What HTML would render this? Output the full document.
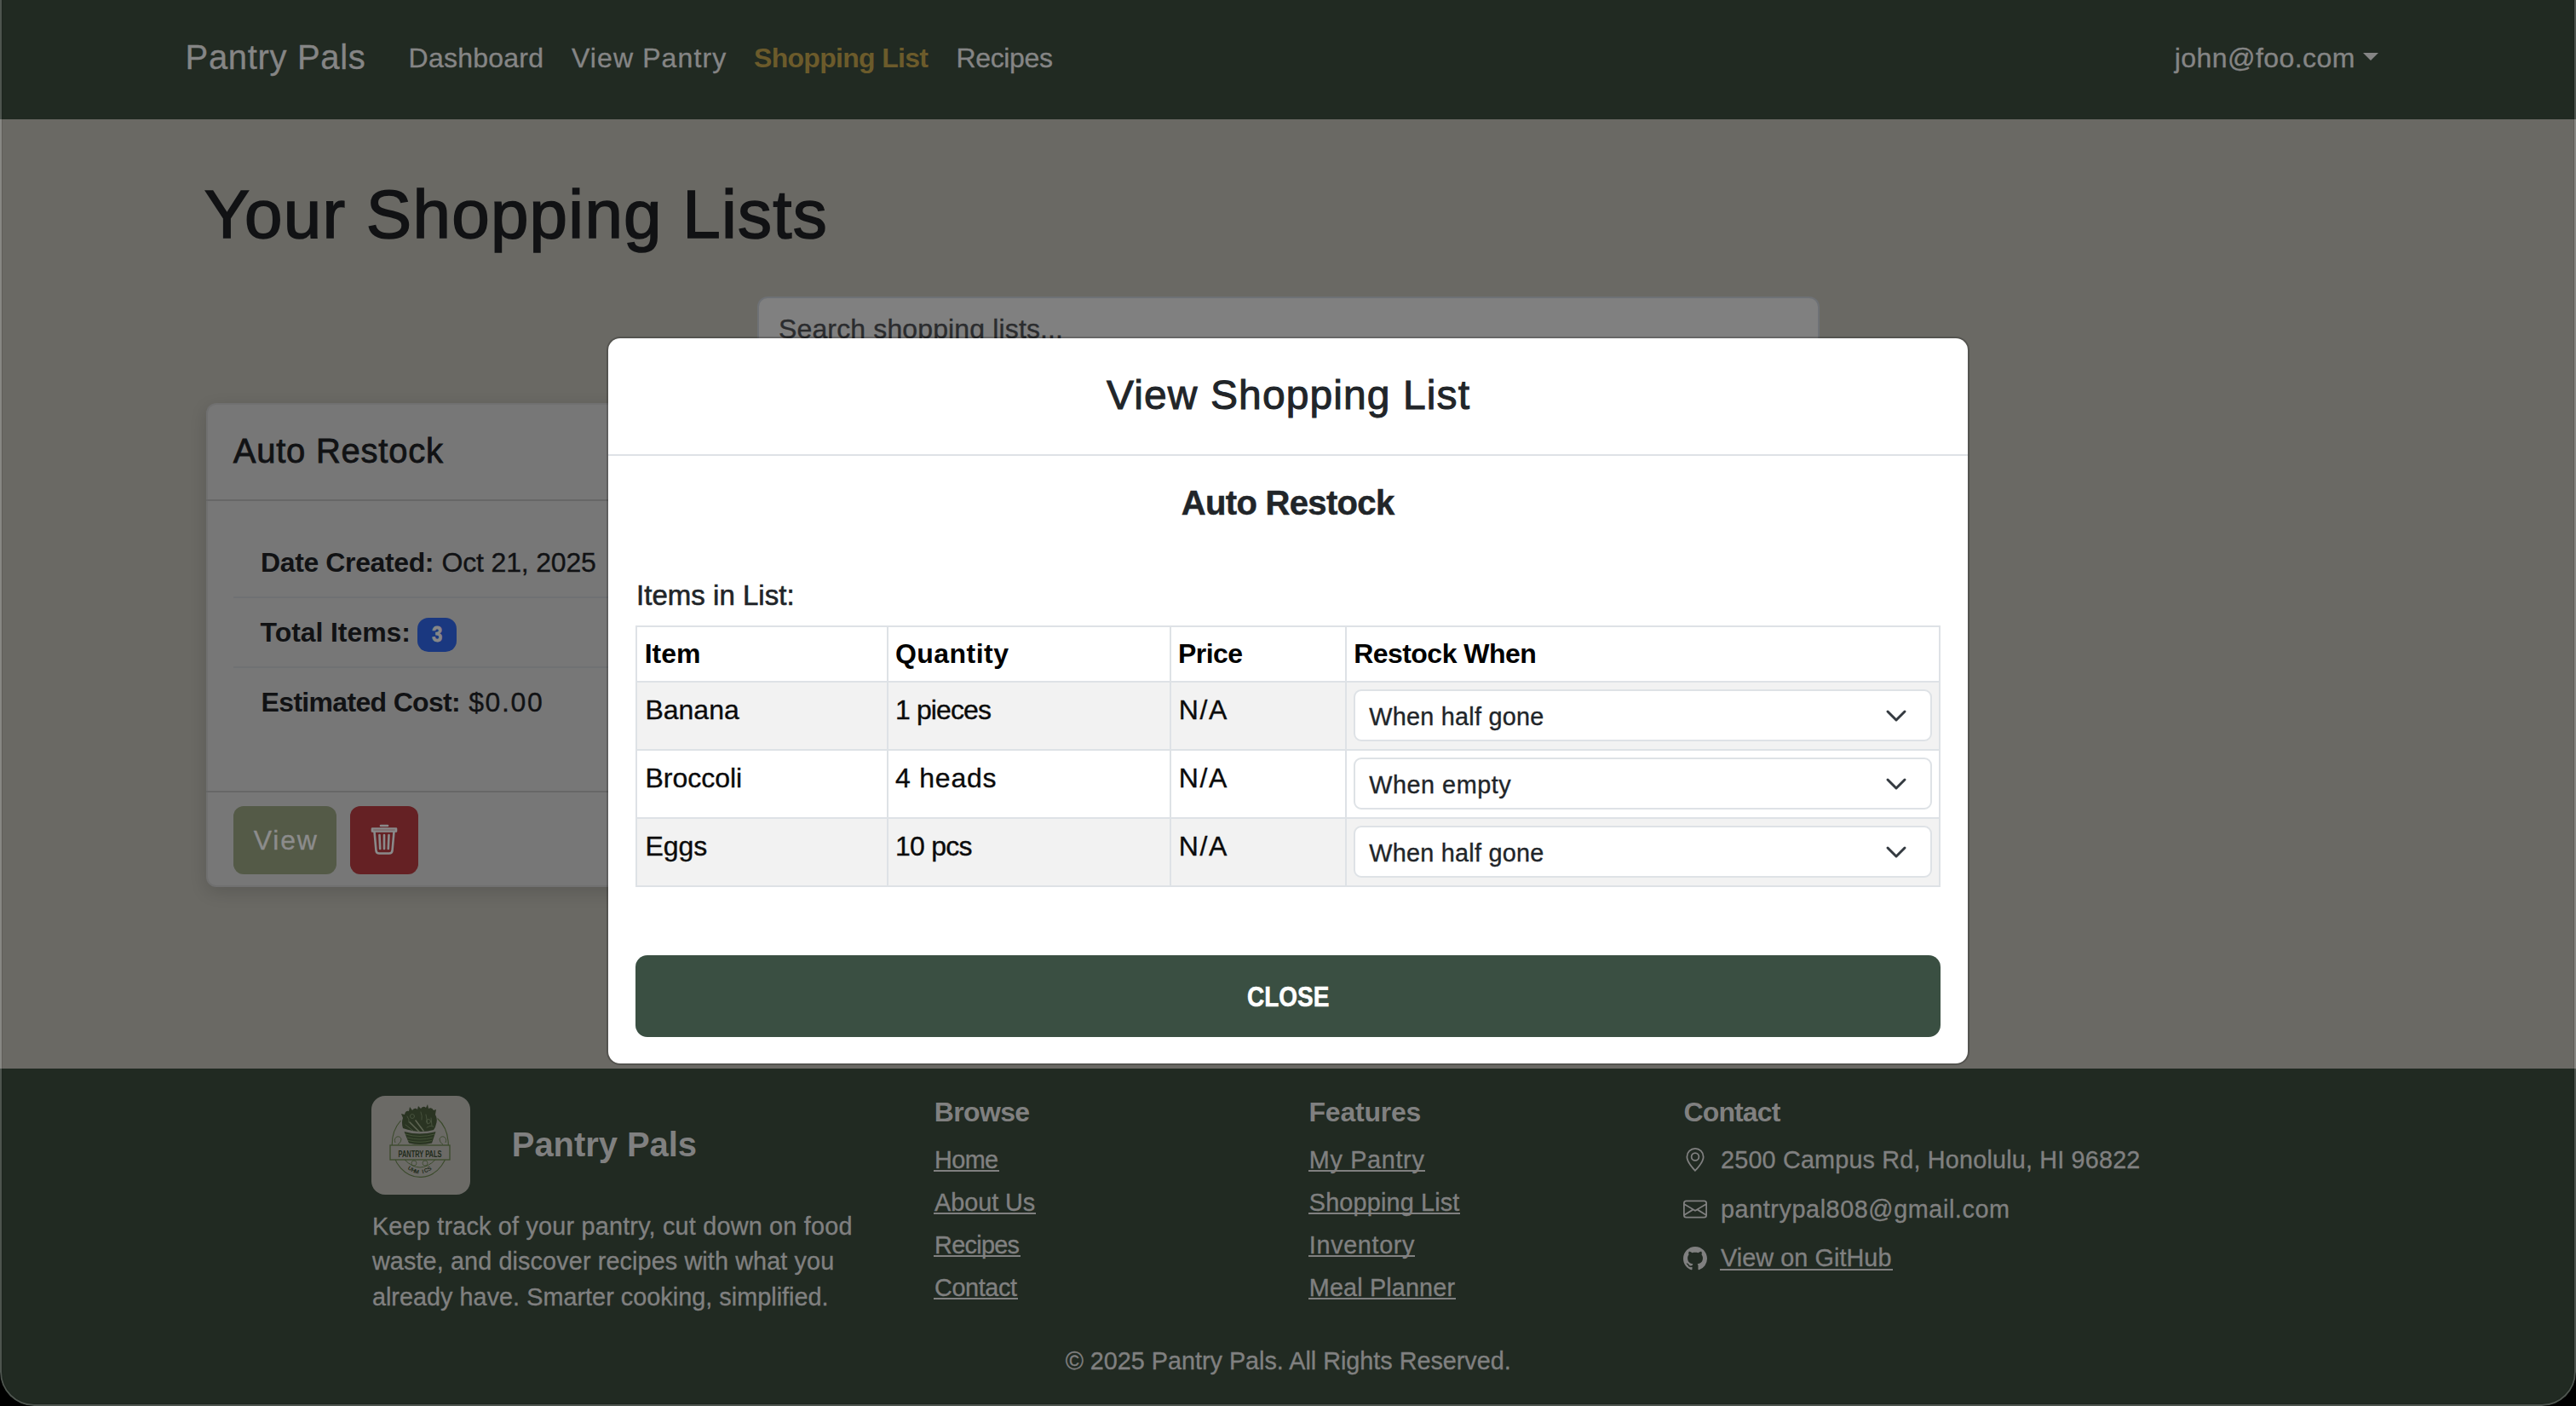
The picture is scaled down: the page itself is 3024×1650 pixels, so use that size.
<!DOCTYPE html>
<html><head><meta charset="utf-8"><title>Pantry Pals - Shopping Lists</title>
<style>
html,body{margin:0;padding:0;}
body{width:3024px;height:1650px;overflow:hidden;background:#000;position:relative;font-family:"Liberation Sans",sans-serif;}
#win{position:absolute;left:0;top:0;width:3024px;height:1650px;overflow:hidden;border-radius:0 0 40px 40px;}
.b{position:absolute;}
.t{position:absolute;white-space:pre;}
#frame{position:absolute;left:0;top:-40px;width:3024px;height:1690px;box-sizing:border-box;border:2px solid rgba(255,255,255,0.2);box-shadow:inset 0 0 0 1px rgba(0,0,0,0.1);border-radius:40px;pointer-events:none;}
</style></head><body><div id="win">
<div class="b" style="left:0px;top:0px;width:3024px;height:140px;background:#212a22"></div>
<span class="t" style="left:217.60px;top:46.63px;font-size:40.00px;line-height:40.00px;color:#858585;letter-spacing:0.668px;-webkit-text-stroke:0.35px #858585">Pantry Pals</span>
<span class="t" style="left:479.60px;top:51.91px;font-size:32.00px;line-height:32.00px;color:#858585;letter-spacing:0.232px;-webkit-text-stroke:0.35px #858585">Dashboard</span>
<span class="t" style="left:670.90px;top:51.91px;font-size:32.00px;line-height:32.00px;color:#858585;letter-spacing:1.116px;-webkit-text-stroke:0.35px #858585">View Pantry</span>
<span class="t" style="left:885.00px;top:51.91px;font-size:32.00px;line-height:32.00px;font-weight:700;color:#6c5b2b;letter-spacing:-0.693px">Shopping List</span>
<span class="t" style="left:1122.60px;top:51.91px;font-size:32.00px;line-height:32.00px;color:#858585;letter-spacing:-0.386px;-webkit-text-stroke:0.35px #858585">Recipes</span>
<span class="t" style="left:2552.80px;top:51.91px;font-size:32.00px;line-height:32.00px;color:#858585;letter-spacing:0.435px;-webkit-text-stroke:0.35px #858585">john@foo.com</span>
<div class="b" style="left:2774px;top:62px;width:0;height:0;border-left:9px solid transparent;border-right:9px solid transparent;border-top:9px solid #858585"></div>
<div class="b" style="left:0px;top:140px;width:3024px;height:1114px;background:#6a6964"></div>
<span class="t" style="left:239.70px;top:212.27px;font-size:80.00px;line-height:80.00px;color:#111214;letter-spacing:1.248px;-webkit-text-stroke:1.6px #111214">Your Shopping Lists</span>
<div class="b" style="left:889px;top:348px;width:1247px;height:112px;background:#808080;border:2px solid #6e7175;border-radius:12px;box-sizing:border-box"></div>
<span class="t" style="left:914.00px;top:369.91px;font-size:32.00px;line-height:32.00px;color:#2b2c2e;letter-spacing:0.137px;-webkit-text-stroke:0.35px #2b2c2e">Search shopping lists...</span>
<div class="b" style="left:242px;top:473px;width:558px;height:568px;background:#777777;border:2px solid rgba(0,0,0,0.06);border-radius:12px;box-sizing:border-box;box-shadow:0 6px 20px rgba(0,0,0,0.14)"></div>
<div class="b" style="left:242px;top:586px;width:558px;height:2px;background:#676767"></div>
<span class="t" style="left:273.80px;top:509.13px;font-size:40.00px;line-height:40.00px;color:#111214;letter-spacing:0.749px;-webkit-text-stroke:0.8px #111214">Auto Restock</span>
<span class="t" style="left:306.00px;top:643.91px;font-size:32.00px;line-height:32.00px;font-weight:700;color:#111214;letter-spacing:-0.380px">Date Created:</span>
<span class="t" style="left:518.60px;top:643.91px;font-size:32.00px;line-height:32.00px;color:#111214;letter-spacing:-0.185px;-webkit-text-stroke:0.35px #111214">Oct 21, 2025</span>
<div class="b" style="left:274px;top:700px;width:526px;height:2px;background:#6f7173"></div>
<span class="t" style="left:305.60px;top:725.91px;font-size:32.00px;line-height:32.00px;font-weight:700;color:#111214;letter-spacing:-0.083px">Total Items:</span>
<div class="b" style="left:490px;top:725px;width:46px;height:40px;background:#1a3880;border-radius:13px"></div>
<span class="t" style="left:506.65px;top:732.03px;font-size:25.00px;line-height:25.00px;font-weight:700;color:#878787;transform:scaleX(0.8849);transform-origin:0 0;-webkit-text-stroke:0.8px #878787">3</span>
<div class="b" style="left:274px;top:782px;width:526px;height:2px;background:#6f7173"></div>
<span class="t" style="left:306.60px;top:808.31px;font-size:32.00px;line-height:32.00px;font-weight:700;color:#111214;letter-spacing:-0.677px">Estimated Cost:</span>
<span class="t" style="left:550.20px;top:808.31px;font-size:32.00px;line-height:32.00px;color:#111214;letter-spacing:1.609px;-webkit-text-stroke:0.35px #111214">$0.00</span>
<div class="b" style="left:242px;top:928px;width:558px;height:2px;background:#676767"></div>
<div class="b" style="left:274px;top:946px;width:121px;height:80px;background:#545a47;border-radius:12px"></div>
<span class="t" style="left:297.70px;top:969.91px;font-size:32.00px;line-height:32.00px;color:#8c8c8c;letter-spacing:1.812px;-webkit-text-stroke:0.35px #8c8c8c">View</span>
<div class="b" style="left:411px;top:946px;width:80px;height:80px;background:#652124;border-radius:12px"></div>
<svg class="b" style="left:434px;top:966px" width="34" height="38" viewBox="0 0 34 38" fill="none" stroke="#8a8a8a" stroke-width="2.6" stroke-linecap="round" stroke-linejoin="round">
<path d="M3 6.5 H31 V9.5 H3 Z"/><path d="M13 3 H21"/><path d="M5.5 10 L7.5 32.5 Q8 35.5 11 35.5 H23 Q26 35.5 26.5 32.5 L28.5 10"/>
<path d="M11.5 14 L12.2 30"/><path d="M17 14 V30"/><path d="M22.5 14 L21.8 30"/></svg>
<div class="b" style="left:0px;top:1254px;width:3024px;height:396px;background:#212a22"></div>
<div class="b" style="left:436px;top:1286px;width:116px;height:116px;background:#6b6a66;border-radius:16px"></div>
<svg class="b" style="left:436px;top:1286px" width="116" height="116" viewBox="0 0 116 116" fill="none">
<path d="M34.5 29 A33 38.5 0 1 0 77.5 26.5" stroke="#3b4a2c" stroke-width="1.1"/>
<g fill="#2a3422">
<path d="M37 38 Q35 31 37 26 L35 21 L39 22 Q40 17 44 18 L45 13 L48 17 Q51 13 54 16 L55 12 L58 15 Q61 11 64 14 L66 10 L67 15 Q71 13 73 17 L76 16 L75 22 Q78 27 76 33 Q75 38 73 40 Q57 45 37 38 Z"/>
</g>
<g stroke="#5d6452" stroke-width="1.6" stroke-linecap="round">
<path d="M45 31 L56 42"/><path d="M52 29 L61 41"/>
</g>
<g stroke="#4a5540" stroke-width="0.9" stroke-linecap="round">
<path d="M40 34 L49 41"/><path d="M64 22 L66 33"/><path d="M70 26 L71 35"/><path d="M42 24 Q45 28 44 31"/><path d="M58 19 Q60 24 59 28"/><path d="M65 37 Q69 34 73 36"/>
<circle cx="67" cy="30" r="2.5" fill="none"/><circle cx="48" cy="24" r="2.5" fill="none"/>
</g>
<path d="M38.5 42 Q57 47 75.5 42 L71 55.5 Q57 58.5 44 55.5 Z" fill="#2a3522"/>
<g stroke="#4f5e40" stroke-width="0.7">
<path d="M40 45 Q57 50 74 45"/><path d="M42 49 Q57 53 72 49"/><path d="M43 52.5 Q57 56 71 52.5"/>
</g>
<path d="M28 55 Q26 50 30 48 Q34 47 35 51 Q35 55 31 57" stroke="#3b4a2c" stroke-width="0.9"/>
<path d="M87 55 Q89 50 85 48 Q81 47 80 51 Q80 55 84 57" stroke="#3b4a2c" stroke-width="0.9"/>
<rect x="22" y="58" width="70" height="17" fill="#6b6a66" stroke="#3b4a2c" stroke-width="1.3"/>
<text x="57" y="71.5" font-family="Liberation Sans" font-size="11" font-weight="700" fill="#1f2a1a" text-anchor="middle" textLength="51" lengthAdjust="spacingAndGlyphs">PANTRY PALS</text>
<path d="M39 75 Q57 93 75 75" stroke="#3b4a2c" stroke-width="1"/>
<circle cx="50" cy="79" r="3" stroke="#3b4a2c" stroke-width="0.8"/><circle cx="63" cy="79" r="3" stroke="#3b4a2c" stroke-width="0.8"/>
<text x="0" y="0" transform="translate(44.07 87.17) rotate(34.0)" font-family="Liberation Sans" font-size="6.5" font-weight="700" fill="#1f2a1a" text-anchor="middle">U</text><text x="0" y="0" transform="translate(48.33 89.57) rotate(24.4)" font-family="Liberation Sans" font-size="6.5" font-weight="700" fill="#1f2a1a" text-anchor="middle">H</text><text x="0" y="0" transform="translate(52.55 91.02) rotate(12.9)" font-family="Liberation Sans" font-size="6.5" font-weight="700" fill="#1f2a1a" text-anchor="middle">M</text><text x="0" y="0" transform="translate(60.91 91.02) rotate(-13.1)" font-family="Liberation Sans" font-size="6.5" font-weight="700" fill="#1f2a1a" text-anchor="middle">I</text><text x="0" y="0" transform="translate(65.05 89.57) rotate(-25.1)" font-family="Liberation Sans" font-size="6.5" font-weight="700" fill="#1f2a1a" text-anchor="middle">C</text><text x="0" y="0" transform="translate(69.15 87.17) rotate(-35.3)" font-family="Liberation Sans" font-size="6.5" font-weight="700" fill="#1f2a1a" text-anchor="middle">S</text>
</svg>
<span class="t" style="left:600.80px;top:1323.33px;font-size:40.00px;line-height:40.00px;font-weight:700;color:#808080;letter-spacing:-0.068px">Pantry Pals</span>
<span class="t" style="left:436.90px;top:1424.52px;font-size:28.80px;line-height:28.80px;color:#808080;letter-spacing:0.205px;-webkit-text-stroke:0.35px #808080">Keep track of your pantry, cut down on food</span>
<span class="t" style="left:436.96px;top:1466.32px;font-size:28.80px;line-height:28.80px;color:#808080;letter-spacing:0.112px;-webkit-text-stroke:0.35px #808080">waste, and discover recipes with what you</span>
<span class="t" style="left:436.90px;top:1508.02px;font-size:28.80px;line-height:28.80px;color:#808080;letter-spacing:0.028px;-webkit-text-stroke:0.35px #808080">already have. Smarter cooking, simplified.</span>
<span class="t" style="left:1096.85px;top:1288.91px;font-size:32.00px;line-height:32.00px;font-weight:700;color:#808080;letter-spacing:-0.677px">Browse</span>
<span class="t" style="left:1536.50px;top:1288.91px;font-size:32.00px;line-height:32.00px;font-weight:700;color:#808080;letter-spacing:-0.211px">Features</span>
<span class="t" style="left:1976.50px;top:1288.91px;font-size:32.00px;line-height:32.00px;font-weight:700;color:#808080;letter-spacing:-0.884px">Contact</span>
<span class="t" style="left:1097.10px;top:1346.52px;font-size:28.80px;line-height:28.80px;color:#808080;letter-spacing:-0.613px;-webkit-text-stroke:0.35px #808080">Home</span>
<div class="b" style="left:1096.1px;top:1372.9px;width:77.0px;height:2.0px;background:#808080"></div>
<span class="t" style="left:1536.80px;top:1346.52px;font-size:28.80px;line-height:28.80px;color:#808080;letter-spacing:0.671px;-webkit-text-stroke:0.35px #808080">My Pantry</span>
<div class="b" style="left:1535.8px;top:1372.9px;width:137.0px;height:2.0px;background:#808080"></div>
<span class="t" style="left:1097.10px;top:1396.52px;font-size:28.80px;line-height:28.80px;color:#808080;letter-spacing:-0.051px;-webkit-text-stroke:0.35px #808080">About Us</span>
<div class="b" style="left:1096.1px;top:1422.9px;width:120.10000000000014px;height:2.0px;background:#808080"></div>
<span class="t" style="left:1536.80px;top:1396.52px;font-size:28.80px;line-height:28.80px;color:#808080;letter-spacing:0.164px;-webkit-text-stroke:0.35px #808080">Shopping List</span>
<div class="b" style="left:1535.8px;top:1422.9px;width:178.5px;height:2.0px;background:#808080"></div>
<span class="t" style="left:1097.10px;top:1446.52px;font-size:28.80px;line-height:28.80px;color:#808080;letter-spacing:-0.692px;-webkit-text-stroke:0.35px #808080">Recipes</span>
<div class="b" style="left:1096.1px;top:1472.9px;width:101.90000000000009px;height:2.0px;background:#808080"></div>
<span class="t" style="left:1536.80px;top:1446.52px;font-size:28.80px;line-height:28.80px;color:#808080;letter-spacing:0.656px;-webkit-text-stroke:0.35px #808080">Inventory</span>
<div class="b" style="left:1535.8px;top:1472.9px;width:125.70000000000005px;height:2.0px;background:#808080"></div>
<span class="t" style="left:1097.10px;top:1496.52px;font-size:28.80px;line-height:28.80px;color:#808080;letter-spacing:-0.391px;-webkit-text-stroke:0.35px #808080">Contact</span>
<div class="b" style="left:1096.1px;top:1522.9px;width:98.90000000000009px;height:2.0px;background:#808080"></div>
<span class="t" style="left:1536.80px;top:1496.52px;font-size:28.80px;line-height:28.80px;color:#808080;letter-spacing:0.137px;-webkit-text-stroke:0.35px #808080">Meal Planner</span>
<div class="b" style="left:1535.8px;top:1522.9px;width:173.20000000000005px;height:2.0px;background:#808080"></div>
<span class="t" style="left:2020.00px;top:1346.92px;font-size:28.80px;line-height:28.80px;color:#808080;letter-spacing:0.173px;-webkit-text-stroke:0.35px #808080">2500 Campus Rd, Honolulu, HI 96822</span>
<span class="t" style="left:2020.00px;top:1404.62px;font-size:28.80px;line-height:28.80px;color:#808080;letter-spacing:0.572px;-webkit-text-stroke:0.35px #808080">pantrypal808@gmail.com</span>
<span class="t" style="left:2020.00px;top:1462.22px;font-size:28.80px;line-height:28.80px;color:#808080;letter-spacing:0.070px;-webkit-text-stroke:0.35px #808080">View on GitHub</span>
<div class="b" style="left:2019px;top:1489px;width:203px;height:2px;background:#808080"></div>
<svg class="b" style="left:1976.2px;top:1346.8px" width="28" height="28" viewBox="0 0 16 16"><path fill="#808080" d="M12.166 8.94c-.524 1.062-1.234 2.12-1.96 3.07A32 32 0 0 1 8 14.58a32 32 0 0 1-2.206-2.57c-.726-.95-1.436-2.008-1.96-3.07C3.304 7.867 3 6.862 3 6a5 5 0 0 1 10 0c0 .862-.305 1.867-.834 2.94M8 16s6-5.686 6-10A6 6 0 0 0 2 6c0 4.314 6 10 6 10"/><path fill="#808080" d="M8 8a2 2 0 1 1 0-4 2 2 0 0 1 0 4m0 1a3 3 0 1 0 0-6 3 3 0 0 0 0 6"/></svg>
<svg class="b" style="left:1976px;top:1404.8px" width="28" height="28" viewBox="0 0 16 16"><path fill="#808080" d="M0 4a2 2 0 0 1 2-2h12a2 2 0 0 1 2 2v8a2 2 0 0 1-2 2H2a2 2 0 0 1-2-2zm2-1a1 1 0 0 0-1 1v.217l7 4.2 7-4.2V4a1 1 0 0 0-1-1zm13 2.383-4.708 2.825L15 11.105zm-.034 6.876-5.64-3.471L8 9.583l-1.326-.795-5.640 3.47A1 1 0 0 0 2 13h12a1 1 0 0 0 .966-.741M1 11.105l4.708-2.897L1 5.383z"/></svg>
<svg class="b" style="left:1976px;top:1463px" width="28" height="28" viewBox="0 0 16 16"><path fill="#808080" d="M8 0C3.58 0 0 3.58 0 8c0 3.54 2.29 6.530 5.47 7.59.4.07.55-.17.55-.38 0-.19-.01-.82-.01-1.49-2.01.37-2.53-.49-2.69-.94-.09-.23-.48-.94-.82-1.13-.28-.15-.68-.52-.01-.53.63-.01 1.08.58 1.230.82.72 1.21 1.87.87 2.33.66.07-.52.28-.87.51-1.07-1.78-.2-3.64-.89-3.64-3.95 0-.87.31-1.59.82-2.15-.08-.2-.36-1.02.08-2.12 0 0 .67-.21 2.2.82.64-.18 1.32-.27 2-.27.68 0 1.36.09 2 .27 1.53-1.04 2.2-.82 2.2-.82.44 1.1.16 1.92.08 2.12.51.56.82 1.27.82 2.15 0 3.07-1.87 3.75-3.65 3.95.29.25.54.73.54 1.48 0 1.07-.01 1.93-.01 2.2 0 .21.15.46.55.38A8.013 8.013 0 0 0 16 8c0-4.42-3.58-8-8-8z"/></svg>
<span class="t" style="left:1250.70px;top:1582.52px;font-size:28.80px;line-height:28.80px;color:#808080;letter-spacing:-0.020px;-webkit-text-stroke:0.35px #808080">© 2025 Pantry Pals. All Rights Reserved.</span>
<div class="b" style="left:712px;top:395px;width:1600px;height:855px;background:#fff;background-clip:padding-box;border:2px solid rgba(0,0,0,0.2);border-radius:16px;box-sizing:border-box"></div>
<div class="b" style="left:714px;top:533px;width:1596px;height:2px;background:#dee2e6"></div>
<span class="t" style="left:1299.00px;top:440.36px;font-size:48.00px;line-height:48.00px;color:#212529;letter-spacing:1.096px;-webkit-text-stroke:1.0px #212529">View Shopping List</span>
<span class="t" style="left:1386.75px;top:570.13px;font-size:40.00px;line-height:40.00px;font-weight:700;color:#212529;letter-spacing:-0.671px;-webkit-text-stroke:0.5px #212529">Auto Restock</span>
<span class="t" style="left:747.10px;top:681.56px;font-size:33.00px;line-height:33.00px;color:#212529;letter-spacing:0.021px;-webkit-text-stroke:0.6px #212529">Items in List:</span>
<div class="b" style="left:746px;top:800px;width:1532px;height:80px;background:#f2f2f2"></div>
<div class="b" style="left:746px;top:960px;width:1532px;height:80px;background:#f2f2f2"></div>
<div class="b" style="left:746px;top:734px;width:1532px;height:2px;background:#dee2e6"></div>
<div class="b" style="left:746px;top:799px;width:1532px;height:2px;background:#dee2e6"></div>
<div class="b" style="left:746px;top:879px;width:1532px;height:2px;background:#dee2e6"></div>
<div class="b" style="left:746px;top:959px;width:1532px;height:2px;background:#dee2e6"></div>
<div class="b" style="left:746px;top:1039px;width:1532px;height:2px;background:#dee2e6"></div>
<div class="b" style="left:746px;top:734px;width:2px;height:307px;background:#dee2e6"></div>
<div class="b" style="left:1041px;top:734px;width:2px;height:307px;background:#dee2e6"></div>
<div class="b" style="left:1373px;top:734px;width:2px;height:307px;background:#dee2e6"></div>
<div class="b" style="left:1579px;top:734px;width:2px;height:307px;background:#dee2e6"></div>
<div class="b" style="left:2276px;top:734px;width:2px;height:307px;background:#dee2e6"></div>
<span class="t" style="left:756.70px;top:750.91px;font-size:32.00px;line-height:32.00px;font-weight:700;color:#000">Item</span>
<span class="t" style="left:1051.00px;top:750.91px;font-size:32.00px;line-height:32.00px;font-weight:700;color:#000;letter-spacing:0.458px">Quantity</span>
<span class="t" style="left:1383.00px;top:750.91px;font-size:32.00px;line-height:32.00px;font-weight:700;color:#000;letter-spacing:-0.568px">Price</span>
<span class="t" style="left:1589.20px;top:750.91px;font-size:32.00px;line-height:32.00px;font-weight:700;color:#000;letter-spacing:-0.544px">Restock When</span>
<span class="t" style="left:757.40px;top:816.91px;font-size:32.00px;line-height:32.00px;color:#0b0b0b;-webkit-text-stroke:0.35px #0b0b0b">Banana</span>
<span class="t" style="left:1051.00px;top:816.91px;font-size:32.00px;line-height:32.00px;color:#0b0b0b;letter-spacing:-0.886px;-webkit-text-stroke:0.35px #0b0b0b">1 pieces</span>
<span class="t" style="left:1383.80px;top:816.91px;font-size:32.00px;line-height:32.00px;color:#0b0b0b;letter-spacing:1.578px;-webkit-text-stroke:0.35px #0b0b0b">N/A</span>
<div class="b" style="left:1589px;top:809px;width:679px;height:61px;background:#fff;border:2px solid #dee2e6;border-radius:9px;box-sizing:border-box"></div>
<span class="t" style="left:1607.30px;top:826.62px;font-size:28.80px;line-height:28.80px;color:#212529;letter-spacing:0.258px;-webkit-text-stroke:0.35px #212529">When half gone</span>
<svg class="b" style="left:2213px;top:832px" width="26" height="16" viewBox="0 0 26 16" fill="none" stroke="#343a40" stroke-width="3" stroke-linecap="round" stroke-linejoin="round"><path d="M3 3 L13 13 L23 3"/></svg>
<span class="t" style="left:757.40px;top:896.91px;font-size:32.00px;line-height:32.00px;color:#0b0b0b;-webkit-text-stroke:0.35px #0b0b0b">Broccoli</span>
<span class="t" style="left:1051.00px;top:896.91px;font-size:32.00px;line-height:32.00px;color:#0b0b0b;letter-spacing:0.785px;-webkit-text-stroke:0.35px #0b0b0b">4 heads</span>
<span class="t" style="left:1383.80px;top:896.91px;font-size:32.00px;line-height:32.00px;color:#0b0b0b;letter-spacing:1.578px;-webkit-text-stroke:0.35px #0b0b0b">N/A</span>
<div class="b" style="left:1589px;top:889px;width:679px;height:61px;background:#fff;border:2px solid #dee2e6;border-radius:9px;box-sizing:border-box"></div>
<span class="t" style="left:1607.30px;top:906.62px;font-size:28.80px;line-height:28.80px;color:#212529;letter-spacing:0.516px;-webkit-text-stroke:0.35px #212529">When empty</span>
<svg class="b" style="left:2213px;top:912px" width="26" height="16" viewBox="0 0 26 16" fill="none" stroke="#343a40" stroke-width="3" stroke-linecap="round" stroke-linejoin="round"><path d="M3 3 L13 13 L23 3"/></svg>
<span class="t" style="left:757.40px;top:976.91px;font-size:32.00px;line-height:32.00px;color:#0b0b0b;-webkit-text-stroke:0.35px #0b0b0b">Eggs</span>
<span class="t" style="left:1051.00px;top:976.91px;font-size:32.00px;line-height:32.00px;color:#0b0b0b;letter-spacing:-0.734px;-webkit-text-stroke:0.35px #0b0b0b">10 pcs</span>
<span class="t" style="left:1383.80px;top:976.91px;font-size:32.00px;line-height:32.00px;color:#0b0b0b;letter-spacing:1.578px;-webkit-text-stroke:0.35px #0b0b0b">N/A</span>
<div class="b" style="left:1589px;top:969px;width:679px;height:61px;background:#fff;border:2px solid #dee2e6;border-radius:9px;box-sizing:border-box"></div>
<span class="t" style="left:1607.30px;top:986.62px;font-size:28.80px;line-height:28.80px;color:#212529;letter-spacing:0.258px;-webkit-text-stroke:0.35px #212529">When half gone</span>
<svg class="b" style="left:2213px;top:992px" width="26" height="16" viewBox="0 0 26 16" fill="none" stroke="#343a40" stroke-width="3" stroke-linecap="round" stroke-linejoin="round"><path d="M3 3 L13 13 L23 3"/></svg>
<div class="b" style="left:746px;top:1121px;width:1532px;height:96px;background:#3a4f42;border-radius:14px"></div>
<span class="t" style="left:1463.85px;top:1151.71px;font-size:34.00px;line-height:34.00px;font-weight:700;color:#ffffff;transform:scaleX(0.8222);transform-origin:0 0;-webkit-text-stroke:0.6px #ffffff">CLOSE</span>
<div id="frame"></div>
</div></body></html>
